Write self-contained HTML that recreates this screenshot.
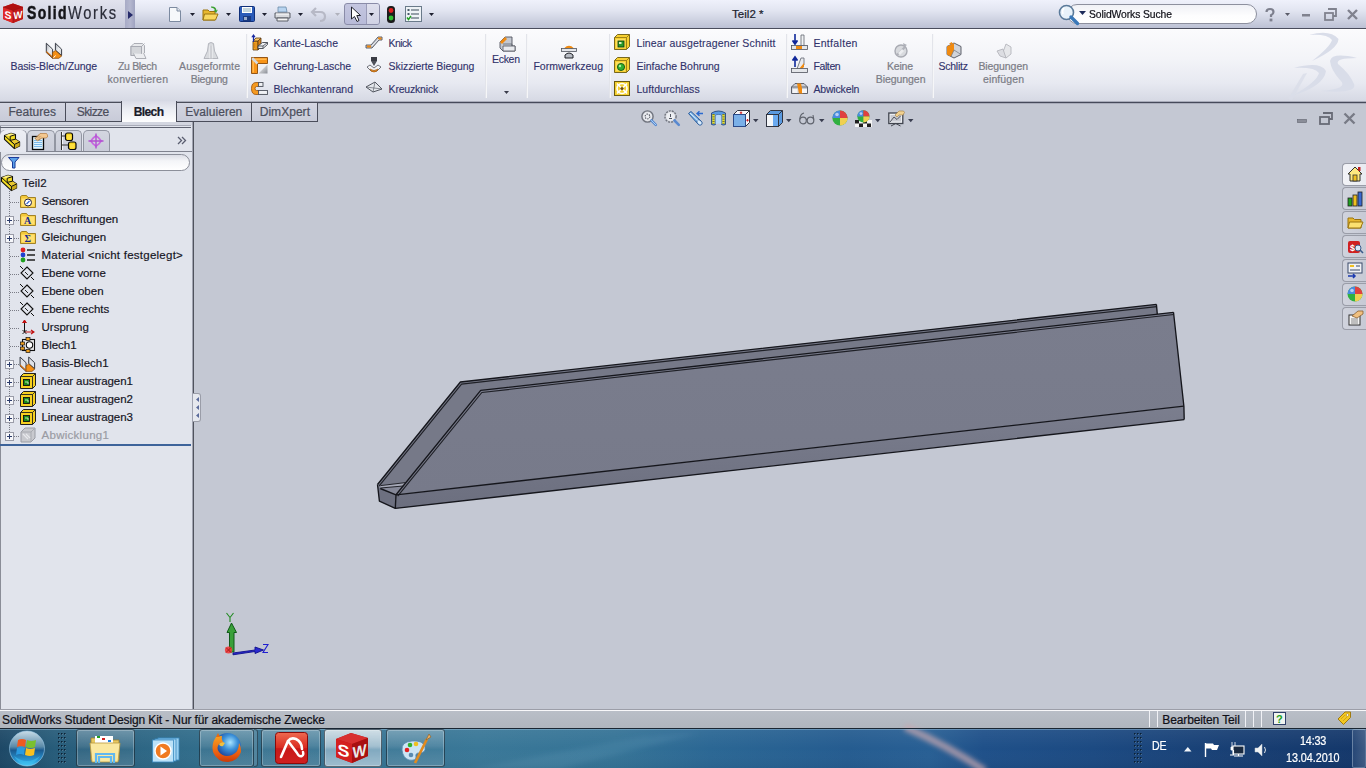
<!DOCTYPE html>
<html><head><meta charset="utf-8"><style>
*{margin:0;padding:0;box-sizing:border-box}
html,body{width:1366px;height:768px;overflow:hidden;font-family:"Liberation Sans",sans-serif;background:#c8ccd6;position:relative}
.a{position:absolute}
.t{white-space:nowrap;line-height:1}
.k{-webkit-text-stroke:.25px currentColor}
svg{position:absolute;overflow:visible}
#title{left:0;top:0;width:1366px;height:30px;background:linear-gradient(#eff1fb,#e2e5f1 35%,#cfd3e2 65%,#bcc1d4 93.3%,#4a4d5c 93.3%,#4a4d5c 96.67%,#ffffff 96.67%)}
#logo{left:0;top:0;width:125px;height:28px;background:linear-gradient(#e2e3ee,#d4d6e4 50%,#c3c6d8)}
#logoarr{left:125px;top:0;width:10px;height:28px;background:linear-gradient(90deg,#a8abc6,#b4b7cf 50%,#9fa3c0)}
#ribbon{left:0;top:30px;width:1366px;height:71px;background:linear-gradient(#fbfbfd,#f3f4f8 40%,#e7e9f1 75%,#d6d9e4)}
#ribline{left:0;top:101px;width:1366px;height:3px;background:linear-gradient(#a9acba,#a9acba 33%,#464a5a 33%,#464a5a 67%,#a9acba 67%)}
.sep{top:34px;width:2px;height:64px;background:linear-gradient(90deg,#d9dbe3,#ffffff)}
#tabs{left:0;top:104px;width:1366px;height:18px;background:#c4c8d3}
.tab{top:102px;height:20px;background:linear-gradient(#d4d6e2,#c8cbd8);border:1px solid #4a4d5a}
#view{left:194px;top:122px;width:1172px;height:588px;background:#c4c8d3}
#panel{left:0;top:122px;width:194px;height:587px;background:#e1e4ec}
#status{left:0;top:709px;width:1366px;height:19px;background:linear-gradient(#9c9ea8 0,#9c9ea8 1px,#f8f8fa 1px,#f8f8fa 2px,#b9bec7 2px,#b0b6be)}
#taskbar{left:0;top:728px;width:1366px;height:40px;border-top:1px solid #1a2632;box-shadow:inset 0 1px 0 rgba(150,190,210,.55);background:linear-gradient(90deg,#21476b 0,#2c5c7d 6%,#3a7190 16%,#3b7393 28%,#35698c 45%,#2d5c86 60%,#244e7e 75%,#1d4272 88%,#1a3b6b 100%)}
.tb{top:729px;height:38px;width:58px;border-radius:3px;border:1px solid rgba(10,20,30,.55);box-shadow:inset 0 0 0 1px rgba(255,255,255,.25);background:linear-gradient(rgba(255,255,255,.28),rgba(255,255,255,.12) 45%,rgba(255,255,255,.05) 55%,rgba(255,255,255,.14))}
</style></head><body>
<div id="title" class="a"></div><div id="logo" class="a"></div><div id="logoarr" class="a"></div>
<svg style="left:2px;top:3px;" width="22" height="21" viewBox="0 0 22 21"><path d="M1 4L11 0.5L21 4L21 16L11 20L1 16Z" fill="#c81818"/><path d="M1 4L11 0.5L21 4L11 7.5Z" fill="#b01010"/><path d="M1 4L11 7.5V20L1 16Z" fill="#e02828"/><path d="M11 7.5L21 4V16L11 20Z" fill="#c01a1a"/><path d="M1 4L11 7.5L21 4M11 7.5V20" stroke="#901010" stroke-width=".6" fill="none"/><text x="2.6" y="16.5" font-family="Liberation Sans" font-weight="bold" font-size="10.5" fill="#fff" transform="skewY(12) translate(0,-2)">S</text><text x="11.5" y="16" font-family="Liberation Sans" font-weight="bold" font-size="10" fill="#fff" transform="skewY(-12) translate(0,3)" textLength="9" lengthAdjust="spacingAndGlyphs">W</text></svg>
<div class="a t" style="left:26.50px;top:5.49px;font-size:17.5px;color:#141418;letter-spacing:1.650px;transform:scaleX(0.8000);transform-origin:0 0;font-weight:bold;-webkit-text-stroke:0.5px #141418;">Solid</div>
<div class="a t" style="left:67.50px;top:5.49px;font-size:17.5px;color:#2a2c38;letter-spacing:1.970px;transform:scaleX(0.8400);transform-origin:0 0;-webkit-text-stroke:0.22px #2a2c38;">Works</div>
<svg style="left:128px;top:11px" width="6" height="8"><path d="M0 0L5 4L0 8Z" fill="#252a6a"/></svg>
<svg style="left:168px;top:6px;" width="14" height="17" viewBox="0 0 14 17"><path d="M1.5 1.5H9L12.5 5V15.5H1.5Z" fill="#f6f8fb" stroke="#7c8aa0"/><path d="M9 1.5V5H12.5" fill="#dfe5ee" stroke="#7c8aa0"/></svg>
<svg style="left:190px;top:13px;" width="6" height="4" viewBox="0 0 6 4"><path d="M0 0H5L2.5 3Z" fill="#1e2030"/></svg>
<svg style="left:202px;top:5px;" width="17" height="17" viewBox="0 0 17 17"><path d="M1 5H6L7.5 6.5H13V15H1Z" fill="#e8b830" stroke="#9a7410"/><path d="M2.5 9H16L13.5 15H1Z" fill="#f8d860" stroke="#9a7410"/><path d="M9 1.5Q14 1 14.5 5.5L16 4.5L14 8L11.5 5L13 5.5Q12.5 3 9 2.5Z" fill="#3aa030"/></svg>
<svg style="left:226px;top:13px;" width="6" height="4" viewBox="0 0 6 4"><path d="M0 0H5L2.5 3Z" fill="#1e2030"/></svg>
<svg style="left:239px;top:6px;" width="16" height="16" viewBox="0 0 16 16"><rect x=".5" y=".5" width="15" height="15" rx="1" fill="#2a5ab8" stroke="#10307a"/><rect x="3" y="1" width="10" height="6" fill="#fff"/><path d="M4 3H12M4 5H12" stroke="#8ab"/><rect x="4" y="10" width="8" height="5" fill="#1a3a80"/><rect x="5" y="11" width="3" height="3" fill="#9ac"/></svg>
<svg style="left:262px;top:13px;" width="6" height="4" viewBox="0 0 6 4"><path d="M0 0H5L2.5 3Z" fill="#1e2030"/></svg>
<svg style="left:274px;top:6px;" width="17" height="16" viewBox="0 0 17 16"><path d="M4 1H12L13 6H4Z" fill="#b8d4f0" stroke="#6a8aa8" stroke-width=".8"/><path d="M1 7H16V12H1Z" fill="#d8dade" stroke="#5a5e66"/><path d="M3 12H14V15H3Z" fill="#f4f4f4" stroke="#5a5e66"/><path d="M2 8H15" stroke="#fff"/></svg>
<svg style="left:298px;top:13px;" width="6" height="4" viewBox="0 0 6 4"><path d="M0 0H5L2.5 3Z" fill="#1e2030"/></svg>
<svg style="left:311px;top:6px;" width="16" height="16" viewBox="0 0 16 16"><path d="M5 2L1 6L5 10M1.5 6H9Q14 6 14 10.5Q14 15 9 15" fill="none" stroke="#b7b9c6" stroke-width="2.2"/></svg>
<svg style="left:335px;top:13px;" width="6" height="4" viewBox="0 0 6 4"><path d="M0 0H5L2.5 3Z" fill="#b0b2bc"/></svg>
<div class="a" style="left:344px;top:3px;width:36px;height:22px;border:1px solid #8a8ca8;border-radius:3px;background:linear-gradient(#c4c6e0,#b8bbd8)"></div>
<div class="a" style="left:366px;top:4px;width:13px;height:20px;background:linear-gradient(#dfe0ee,#d0d2e4);border-left:1px solid #9a9cb8;border-radius:0 2px 2px 0"></div>
<svg style="left:350px;top:6px;" width="12" height="16" viewBox="0 0 12 16"><path d="M1.5 1V13L4.5 10.5L7 15.5L9 14.5L6.8 9.5H10.5Z" fill="#fff" stroke="#20222c"/></svg>
<svg style="left:369px;top:13px;" width="6" height="4" viewBox="0 0 6 4"><path d="M0 0H5L2.5 3Z" fill="#1e2030"/></svg>
<svg style="left:386px;top:6px;" width="10" height="17" viewBox="0 0 10 17"><rect x="1" y="0" width="8" height="17" rx="3.5" fill="#1c1c1c"/><circle cx="5" cy="4.5" r="2.4" fill="#e02020"/><circle cx="5" cy="12" r="2.4" fill="#30c030"/></svg>
<svg style="left:405px;top:6px;" width="17" height="16" viewBox="0 0 17 16"><rect x=".5" y=".5" width="16" height="15" fill="#eef2f6" stroke="#6a7a8a"/><path d="M6 4H14M6 8H14M6 12H14" stroke="#3a4a5a"/><rect x="2.5" y="3" width="2" height="2" fill="#4a5a6a"/><rect x="2.5" y="7" width="2" height="2" fill="#4a5a6a"/><path d="M2 11.5L3.5 13.5L6 10" stroke="#20a020" stroke-width="1.4" fill="none"/></svg>
<svg style="left:429px;top:13px;" width="6" height="4" viewBox="0 0 6 4"><path d="M0 0H5L2.5 3Z" fill="#1e2030"/></svg>
<div class="a t" style="left:732.00px;top:9.17px;font-size:11.5px;color:#20222c;letter-spacing:0.030px;-webkit-text-stroke:0.22px #20222c;">Teil2 *</div>
<div class="a" style="left:1067px;top:4px;width:190px;height:20px;border-radius:10px;border:1px solid #8d909e;background:linear-gradient(#f0f1f6,#fdfdfe 60%,#ffffff)"></div>
<svg style="left:1058px;top:4px;" width="22" height="21" viewBox="0 0 22 21"><circle cx="8.5" cy="8.5" r="7" fill="#e8f2fa" stroke="#5a7a9a" stroke-width="1.6"/><path d="M6 4Q4 6 5 10" stroke="#fff" stroke-width="1.5" fill="none"/><path d="M13 13L19.5 19.5" stroke="#3a78b8" stroke-width="3.4" stroke-linecap="round"/></svg>
<svg style="left:1079px;top:11px" width="8" height="5"><path d="M0 0H7L3.5 4Z" fill="#1c2a5a"/></svg>
<div class="a t" style="left:1089.00px;top:8.57px;font-size:11.5px;color:#101018;letter-spacing:-0.102px;transform:scaleX(0.9000);transform-origin:0 0;-webkit-text-stroke:0.22px #101018;">SolidWorks Suche</div>
<svg style="left:1265px;top:8px;" width="10" height="14" viewBox="0 0 10 14"><path d="M1.5 4Q1.5 1 5 1Q8.5 1 8.5 4Q8.5 6 6 7.2V9" fill="none" stroke="#7e808e" stroke-width="2.2"/><rect x="4.6" y="10.6" width="2.8" height="2.8" fill="#7e808e"/></svg>
<svg style="left:1285px;top:13px;" width="6" height="4" viewBox="0 0 6 4"><path d="M0 0H5L2.5 3Z" fill="#5a5c68"/></svg>
<svg style="left:1302px;top:13px;" width="9" height="4" viewBox="0 0 9 4"><rect x="0" y="1" width="8" height="2.5" fill="#80828e"/></svg>
<svg style="left:1324px;top:8px;" width="13" height="13" viewBox="0 0 13 13"><path d="M4 1H12V8H9" fill="none" stroke="#80828e" stroke-width="1.8"/><rect x="1" y="5" width="8" height="7" fill="none" stroke="#80828e" stroke-width="1.8"/></svg>
<svg style="left:1347px;top:9px;" width="11" height="11" viewBox="0 0 11 11"><path d="M1 1L10 10M10 1L1 10" stroke="#80828e" stroke-width="2.4"/></svg>
<div id="ribbon" class="a"></div><div id="ribline" class="a"></div>
<svg style="left:1270px;top:28px;" width="96" height="74" viewBox="0 0 96 74"><path d="M39 7Q60 1 68.5 11Q68 21 42 33Q60 19 62 12Q58 6 39 7Z" fill="#d9dde9"/><path d="M24 40Q50 33 56 43Q54 58 22 68Q47 54 49 45Q45 39 24 40Z" fill="#d9dde9"/><path d="M33 46L37 45L22 72L18 71Z" fill="#d9dde9" fill-opacity=".8"/><path d="M87 30Q62 24 60 33Q61 42 70 52Q80 61 50 63Q88 66 84 56Q80 46 68 36Q65 30 87 30Z" fill="#d9dde9"/></svg>
<div class="a sep" style="left:246px"></div>
<div class="a sep" style="left:485px"></div>
<div class="a sep" style="left:526px"></div>
<div class="a sep" style="left:609px"></div>
<div class="a sep" style="left:786px"></div>
<div class="a sep" style="left:932px"></div>
<div class="a t" style="left:10.60px;top:60.81px;font-size:10.5px;color:#30326a;letter-spacing:-0.108px;-webkit-text-stroke:0.12px #30326a;">Basis-Blech/Zunge</div>
<div class="a t" style="left:118.00px;top:60.81px;font-size:10.5px;color:#7c7d86;letter-spacing:-0.348px;-webkit-text-stroke:0.22px #7c7d86;">Zu Blech</div>
<div class="a t" style="left:107.60px;top:73.81px;font-size:10.5px;color:#7c7d86;letter-spacing:0.238px;-webkit-text-stroke:0.22px #7c7d86;">konvertieren</div>
<div class="a t" style="left:179.00px;top:60.81px;font-size:10.5px;color:#7c7d86;letter-spacing:0.147px;-webkit-text-stroke:0.22px #7c7d86;">Ausgeformte</div>
<div class="a t" style="left:190.70px;top:73.81px;font-size:10.5px;color:#7c7d86;letter-spacing:-0.223px;-webkit-text-stroke:0.22px #7c7d86;">Biegung</div>
<div class="a t" style="left:273.50px;top:37.81px;font-size:10.5px;color:#30326a;letter-spacing:-0.027px;-webkit-text-stroke:0.12px #30326a;">Kante-Lasche</div>
<div class="a t" style="left:273.50px;top:60.96px;font-size:10.5px;color:#30326a;letter-spacing:-0.055px;-webkit-text-stroke:0.12px #30326a;">Gehrung-Lasche</div>
<div class="a t" style="left:273.50px;top:84.11px;font-size:10.5px;color:#30326a;letter-spacing:0.056px;-webkit-text-stroke:0.12px #30326a;">Blechkantenrand</div>
<div class="a t" style="left:388.60px;top:37.81px;font-size:10.5px;color:#30326a;letter-spacing:-0.569px;-webkit-text-stroke:0.12px #30326a;">Knick</div>
<div class="a t" style="left:388.60px;top:60.96px;font-size:10.5px;color:#30326a;letter-spacing:-0.074px;-webkit-text-stroke:0.12px #30326a;">Skizzierte Biegung</div>
<div class="a t" style="left:388.60px;top:84.11px;font-size:10.5px;color:#30326a;letter-spacing:-0.195px;-webkit-text-stroke:0.12px #30326a;">Kreuzknick</div>
<div class="a t" style="left:492.00px;top:53.81px;font-size:10.5px;color:#30326a;letter-spacing:-0.296px;-webkit-text-stroke:0.12px #30326a;">Ecken</div>
<div class="a t" style="left:533.40px;top:61.11px;font-size:10.5px;color:#30326a;letter-spacing:0.015px;-webkit-text-stroke:0.12px #30326a;">Formwerkzeug</div>
<div class="a t" style="left:636.40px;top:37.81px;font-size:10.5px;color:#30326a;letter-spacing:0.154px;-webkit-text-stroke:0.12px #30326a;">Linear ausgetragener Schnitt</div>
<div class="a t" style="left:636.40px;top:60.96px;font-size:10.5px;color:#30326a;letter-spacing:-0.012px;-webkit-text-stroke:0.12px #30326a;">Einfache Bohrung</div>
<div class="a t" style="left:636.40px;top:84.11px;font-size:10.5px;color:#30326a;letter-spacing:0.071px;-webkit-text-stroke:0.12px #30326a;">Luftdurchlass</div>
<div class="a t" style="left:813.40px;top:37.81px;font-size:10.5px;color:#30326a;letter-spacing:0.319px;-webkit-text-stroke:0.12px #30326a;">Entfalten</div>
<div class="a t" style="left:813.40px;top:60.96px;font-size:10.5px;color:#30326a;letter-spacing:-0.377px;-webkit-text-stroke:0.12px #30326a;">Falten</div>
<div class="a t" style="left:813.40px;top:84.11px;font-size:10.5px;color:#30326a;letter-spacing:-0.159px;-webkit-text-stroke:0.12px #30326a;">Abwickeln</div>
<div class="a t" style="left:887.00px;top:61.11px;font-size:10.5px;color:#7c7d86;letter-spacing:-0.214px;-webkit-text-stroke:0.22px #7c7d86;">Keine</div>
<div class="a t" style="left:875.70px;top:74.11px;font-size:10.5px;color:#7c7d86;letter-spacing:-0.052px;-webkit-text-stroke:0.22px #7c7d86;">Biegungen</div>
<div class="a t" style="left:938.40px;top:61.11px;font-size:10.5px;color:#30326a;letter-spacing:-0.221px;-webkit-text-stroke:0.12px #30326a;">Schlitz</div>
<div class="a t" style="left:978.40px;top:61.11px;font-size:10.5px;color:#7c7d86;letter-spacing:-0.077px;-webkit-text-stroke:0.22px #7c7d86;">Biegungen</div>
<div class="a t" style="left:983.00px;top:74.11px;font-size:10.5px;color:#7c7d86;letter-spacing:0.102px;-webkit-text-stroke:0.22px #7c7d86;">einfügen</div>
<svg style="left:42px;top:40px;" width="24" height="22" viewBox="0 0 24 22"><defs><linearGradient id="bbg" x1="0" y1="0" x2="1" y2="1"><stop offset="0" stop-color="#a8acb4"/><stop offset=".5" stop-color="#eef0f2"/><stop offset="1" stop-color="#c8ccd2"/></linearGradient></defs><path d="M4.3 3.2L10.6 9.2V18.3L4.3 12.6Z" fill="url(#bbg)" stroke="#3a3e48" stroke-width="1"/><path d="M4.3 10.8L10.6 16.5V18.3L4.3 12.6Z" fill="#c86a10"/><path d="M13.4 3.2L19.6 9.2V15.5L13.4 10Z" fill="url(#bbg)" stroke="#3a3e48" stroke-width="1"/><path d="M10.6 12.5L13.4 10.5L19.6 16L16.8 18.3H10.6Z" fill="#f59015" stroke="#8a4a08" stroke-width=".8"/><path d="M11.5 17.8L13.5 15.5" stroke="#fff" stroke-width="1"/></svg>
<svg style="left:130px;top:43px;" width="17" height="16" viewBox="0 0 17 16"><path d="M1 3.5L4 .5H12.5L14.5 2.5V10L11.5 12.5H1Z" fill="#e8e9ec" stroke="#a4a6ae" stroke-width=".9"/><rect x="1" y="3.5" width="10.5" height="9" fill="#d4d6da" stroke="#a4a6ae" stroke-width=".9"/><path d="M11.5 3.5L14.5 .5" stroke="#a4a6ae" stroke-width=".9"/><path d="M3.5 10.5L6 15.5H16L14 11" fill="#ecedf0" stroke="#a4a6ae" stroke-width=".9"/></svg>
<svg style="left:203px;top:42px;" width="16" height="18" viewBox="0 0 16 18"><path d="M5.5 1.5Q8 -.5 10.5 1.5L11.5 9L15 16.5H1L4.5 9Z" fill="#d8dade" stroke="#aeb0b8" stroke-width=".9"/><path d="M7 3.5V16.5M9 3.5V16.5" stroke="#f4f5f7" stroke-width="1"/><path d="M8 3.5V16.5" stroke="#b8bac0" stroke-width="1"/></svg>
<svg style="left:251px;top:34px;" width="17" height="17" viewBox="0 0 17 17"><path d="M2 7H7V16H2Z" fill="#f6a524" stroke="#5a3a10" stroke-width=".8"/><path d="M7 7L10 4V13L7 16Z" fill="#d8801a" stroke="#5a3a10" stroke-width=".8"/><path d="M2 7L5 4H10L7 7Z" fill="#fcc868" stroke="#5a3a10" stroke-width=".8"/><path d="M3.5 9V14M5 8.5V15" stroke="#c87010" stroke-width=".6"/><path d="M7 12L11.5 8.5H16.5V10.5L12 14.5H7Z" fill="#eceef2" stroke="#40444e" stroke-width=".9"/><path d="M7 12H12L16.5 8.5M12 12V14.5" fill="none" stroke="#40444e" stroke-width=".8"/><path d="M2.5 8V2" stroke="#1a2aa0" stroke-width="1.3"/><path d="M.3 3.2L2.5 0L4.7 3.2Z" fill="#1a2aa0"/></svg>
<svg style="left:251px;top:57px;" width="17" height="17" viewBox="0 0 17 17"><defs><linearGradient id="gl" x1="0" y1="0" x2="1" y2="1"><stop offset="0" stop-color="#ffffff"/><stop offset="1" stop-color="#8a8e96"/></linearGradient></defs><path d="M.5 .5H16.5V6.5H6.5V16.5H.5Z" fill="#f89418" stroke="#8a4a08" stroke-width=".9"/><path d="M1.5 1.5H15.5V3H3V15.5H1.5Z" fill="#ffb850"/><path d="M1.2 1.2L6.5 6.5" stroke="#d4d8de" stroke-width="2.6"/><path d="M16.5 7.5V16.5H7.5Z" fill="url(#gl)"/></svg>
<svg style="left:251px;top:82px;" width="17" height="13" viewBox="0 0 17 13"><path d="M7.5 .5H5Q.5 .5 .5 6.5Q.5 12.5 5 12.5H7.5V8.5H5.5Q4 8.5 4 6.5Q4 4.5 5.5 4.5H7.5Z" fill="#f59a20" stroke="#9a5008" stroke-width=".8"/><rect x="7.5" y=".5" width="4.5" height="4" fill="#e8eaee" stroke="#50545e" stroke-width=".9"/><rect x="7.5" y="8.5" width="9" height="4" fill="#e8eaee" stroke="#50545e" stroke-width=".9"/><path d="M9 2H11M9 10H15" stroke="#fff" stroke-width=".8"/></svg>
<svg style="left:366px;top:35px;" width="17" height="13" viewBox="0 0 17 13"><path d="M0 10H5L12 2H16V5H13L6 13H0Z" fill="#c0c4cc" stroke="#50545e" stroke-width=".9"/><path d="M1 10.5H5V12.5H1Z" fill="#f08a10"/><path d="M12 2.5H15.5V4.5H12Z" fill="#f08a10"/><path d="M6 11L12.5 4" stroke="#eef0f4" stroke-width="1"/></svg>
<svg style="left:366px;top:57px;" width="16" height="16" viewBox="0 0 16 16"><rect x="5" y="0" width="6" height="4" fill="#3a3c44"/><path d="M5 4H11L8 9Z" fill="#50525a"/><path d="M1 10L4 8L8 11L12 8L15 10L11 14H5Z" fill="#f4f4f6" stroke="#50545e" stroke-width=".8"/><path d="M4 12Q8 15 12 12L11 14Q8 16 5 14Z" fill="#f08a10" stroke="#9a5008" stroke-width=".6"/></svg>
<svg style="left:366px;top:82px;" width="17" height="11" viewBox="0 0 17 11"><path d="M0 5L9 0L16 7L7 10Z" fill="#e4e7ec" stroke="#40444e" stroke-width=".9"/><path d="M9 0L7 10M0 5L16 7" stroke="#60646e" stroke-width=".7"/></svg>
<svg style="left:499px;top:36px;" width="17" height="16" viewBox="0 0 17 16"><path d="M1 6L6 1H13V10H16V15H4L1 12Z" fill="#c4c8d0" stroke="#50545e" stroke-width=".9"/><path d="M1 6L6 1L8 3L3 8Z" fill="#f08a10"/><path d="M4 10H16V15H4Z" fill="#e8eaee" stroke="#50545e" stroke-width=".8"/><path d="M4 8H13V10" fill="none" stroke="#60646e" stroke-width=".8"/></svg>
<svg style="left:504px;top:91px;" width="6" height="4" viewBox="0 0 6 4"><path d="M0 0H5L2.5 3Z" fill="#3a3c4a"/></svg>
<svg style="left:561px;top:45px;" width="16" height="13" viewBox="0 0 16 13"><path d="M4 4Q8 0 12 4" fill="none" stroke="#f08a10" stroke-width="2.4"/><rect x="0.5" y="3.5" width="15" height="3" fill="#e4e6ea" stroke="#50545e" stroke-width=".8"/><path d="M4 13V10Q8 6 12 10V13Z" fill="#b8bcc4" stroke="#202228" stroke-width="1"/></svg>
<svg style="left:614px;top:34px;" width="16" height="16" viewBox="0 0 16 16"><path d="M.5 3.5L3.5 .5H15.5V12.5L12.5 15.5H.5Z" fill="#f8d030" stroke="#6a5a10" stroke-width=".9"/><path d="M.5 3.5H12.5V15.5M12.5 3.5L15.5 .5" fill="none" stroke="#8a7010" stroke-width=".8"/><rect x="2" y="5" width="9" height="9" fill="#fbe060"/><rect x="4" y="7" width="6" height="6" fill="#2a9a2a" stroke="#0a3a0a" stroke-width=".8"/><rect x="5" y="8" width="2.5" height="2" fill="#e0f0c0"/></svg>
<svg style="left:614px;top:57px;" width="16" height="16" viewBox="0 0 16 16"><path d="M.5 3.5L3.5 .5H15.5V12.5L12.5 15.5H.5Z" fill="#f8d030" stroke="#6a5a10" stroke-width=".9"/><path d="M.5 3.5H12.5V15.5M12.5 3.5L15.5 .5" fill="none" stroke="#8a7010" stroke-width=".8"/><rect x="2" y="5" width="9" height="9" fill="#fbe060"/><circle cx="7" cy="10" r="3.6" fill="#30b030" stroke="#0a4a0a" stroke-width=".8"/><circle cx="6" cy="9" r="1.2" fill="#b0f0a0"/></svg>
<svg style="left:614px;top:81px;" width="16" height="15" viewBox="0 0 16 15"><rect x=".5" y=".5" width="15" height="14" fill="#f4d030" stroke="#6a5a10"/><circle cx="8" cy="7.5" r="5" fill="none" stroke="#fff" stroke-width="1.6"/><path d="M3 2.5L13 12.5M13 2.5L3 12.5" stroke="#fff" stroke-width="1.6"/><circle cx="8" cy="7.5" r="1.6" fill="#6a4a10"/></svg>
<svg style="left:791px;top:34px;" width="17" height="16" viewBox="0 0 17 16"><path d="M4 0V9M1.5 6.5L4 10L6.5 6.5" stroke="#10289a" stroke-width="1.6" fill="#10289a"/><path d="M10 1H13V12H10Z" fill="#f0f2f4" stroke="#60646e" stroke-width=".8"/><rect x=".5" y="11.5" width="16" height="4" fill="#e4e6ea" stroke="#50545e" stroke-width=".8"/><rect x="5" y="12" width="6" height="3" fill="#f08a10"/></svg>
<svg style="left:791px;top:57px;" width="17" height="16" viewBox="0 0 17 16"><path d="M4 10V1M1.5 3.5L4 0L6.5 3.5" stroke="#10289a" stroke-width="1.6" fill="#10289a"/><path d="M10 1H13V8L9 12H6Z" fill="#e8eaee" stroke="#60646e" stroke-width=".8"/><path d="M13 6L8 12H11L13 10Z" fill="#f08a10"/><rect x=".5" y="11.5" width="16" height="4" fill="#e4e6ea" stroke="#50545e" stroke-width=".8"/></svg>
<svg style="left:791px;top:83px;" width="17" height="11" viewBox="0 0 17 11"><path d="M.5 4L4 .5H13L16.5 4V10.5H.5Z" fill="#c8ccd4" stroke="#50545e" stroke-width=".9"/><path d="M.5 4H16.5" stroke="#50545e" stroke-width=".8"/><path d="M6 .5H10L12 10.5H8Z" fill="#f08a10"/><rect x="1.5" y="6" width="5" height="4" fill="#f4f4f6"/><rect x="11" y="6" width="5" height="4" fill="#f4f4f6"/></svg>
<svg style="left:893px;top:43px;" width="16" height="16" viewBox="0 0 16 16"><circle cx="8" cy="8" r="6" fill="#d8dade" stroke="#a8aab2" stroke-width="1.4"/><path d="M4 12L12 4" stroke="#b0b2ba" stroke-width="2"/><path d="M10 0L14 2L11 4Z" fill="#aeb0b8"/><path d="M5 10L9 6L11 8L7 12Z" fill="#ecedf0"/></svg>
<svg style="left:946px;top:42px;" width="16" height="17" viewBox="0 0 16 17"><path d="M8 1L15 4.5V12.5L8 16L1 12.5V4.5Z" fill="#d0d4da" stroke="#50545e" stroke-width=".9"/><path d="M8 1L1 4.5V12.5L5 14.5L8 8V1Z" fill="#f08a10"/><path d="M8 8L15 12.5M8 8L5 14.5" stroke="#70747e" stroke-width=".7"/><path d="M3 1.5L6 0L6.5 3Z" fill="#f08a10"/></svg>
<svg style="left:996px;top:43px;" width="17" height="16" viewBox="0 0 17 16"><path d="M10 1L15 4V11L10 15L7 9Z" fill="#e6e7ea" stroke="#b4b6bc" stroke-width=".9"/><path d="M1 8L7 6L10 15L4 13Z" fill="#dcdde2" stroke="#b4b6bc" stroke-width=".9"/></svg>
<div id="tabs" class="a"></div>
<div class="a tab" style="left:-1px;width:67px"></div>
<div class="a t" style="left:8.50px;top:105.94px;font-size:12px;color:#4b4e5c;letter-spacing:0.020px;-webkit-text-stroke:0.22px #4b4e5c;">Features</div>
<div class="a tab" style="left:65px;width:58px"></div>
<div class="a t" style="left:76.80px;top:105.94px;font-size:12px;color:#4b4e5c;letter-spacing:-0.589px;-webkit-text-stroke:0.22px #4b4e5c;">Skizze</div>
<div class="a tab" style="left:176px;width:76px"></div>
<div class="a t" style="left:185.30px;top:105.94px;font-size:12px;color:#4b4e5c;letter-spacing:0.033px;-webkit-text-stroke:0.22px #4b4e5c;">Evaluieren</div>
<div class="a tab" style="left:251px;width:67px"></div>
<div class="a t" style="left:259.70px;top:105.94px;font-size:12px;color:#4b4e5c;letter-spacing:0.041px;-webkit-text-stroke:0.22px #4b4e5c;">DimXpert</div>
<div class="a" style="left:121px;top:101px;width:56px;height:23px;background:linear-gradient(#d9dbe6,#eceef4 40%,#f8f9fb 80%,#ffffff);border:1px solid #4a4d5a;border-top:none"></div>
<div class="a t" style="left:133.70px;top:105.54px;font-size:12px;color:#1a1c2a;letter-spacing:-0.595px;font-weight:bold;-webkit-text-stroke:0.22px #1a1c2a;">Blech</div>
<div id="view" class="a"></div>
<div id="panel" class="a"></div>
<div class="a" style="left:192px;top:122px;width:1px;height:587px;background:#a0a3b0"></div>
<div class="a" style="left:193px;top:122px;width:1px;height:587px;background:#50535d"></div>
<div class="a" style="left:0px;top:122px;width:1px;height:587px;background:#8a8d97"></div>
<div class="a" style="left:0;top:122px;width:192px;height:3px;background:#d3d6e0"></div>
<div class="a" style="left:0;top:125px;width:191px;height:1px;background:#a8abb8"></div>
<div class="a" style="left:0;top:127px;width:191px;height:1px;background:#5e6270"></div>
<div class="a" style="left:1px;top:151px;width:190px;height:1px;background:#a6a9b4"></div>
<div class="a" style="left:0px;top:130px;width:27px;height:22px;border:1px solid #9296a2;border-left:none;border-bottom:none;border-radius:5px 5px 0 0;background:linear-gradient(#eceef4,#e4e6ee)"></div>
<div class="a" style="left:27px;top:130px;width:28px;height:22px;border:1px solid #9296a2;border-bottom:none;border-radius:5px 5px 0 0;background:linear-gradient(#d3d6e0,#c9ccd8)"></div>
<div class="a" style="left:55px;top:130px;width:27px;height:22px;border:1px solid #9296a2;border-bottom:none;border-radius:5px 5px 0 0;background:linear-gradient(#d3d6e0,#c9ccd8)"></div>
<div class="a" style="left:83px;top:130px;width:27px;height:22px;border:1px solid #9296a2;border-bottom:none;border-radius:5px 5px 0 0;background:linear-gradient(#d3d6e0,#c9ccd8)"></div>
<div class="a" style="left:1px;top:151px;width:191px;height:1px;background:#80838f"></div>
<div class="a" style="left:1px;top:130px;width:25px;height:22px;background:linear-gradient(#eceef4,#e4e6ee);border-radius:5px 5px 0 0"></div>
<svg style="left:4px;top:133px;" width="17" height="17" viewBox="0 0 17 17"><path d="M.5 2.5L7 .3L11.5 1.6V6.2L15.6 9V13.1L10.4 15.6L.5 6.4Z" fill="#f2dc20" stroke="#101010" stroke-width="1.1" stroke-linejoin="round"/><path d="M.5 2.5L7 .3L11.5 1.6L6 3.3Z" fill="#fff080"/><path d="M6.2 7.4L11.5 6.2L15.6 9L10.4 11.4Z" fill="#e8c830"/><path d="M10.4 11.4L15.6 9V13.1L10.4 15.6Z" fill="#c8a818"/><path d="M.5 2.5L10.4 11.4V15.6M10.4 11.4L15.6 9M6.2 3.3V7.4L11.5 6.2M6.2 3.3L11.5 1.6M6.2 7.4L10.4 11.4" fill="none" stroke="#101010" stroke-width="1"/></svg>
<svg style="left:31px;top:133px;" width="18" height="17" viewBox="0 0 18 17"><rect x="1.5" y="3.5" width="11" height="13" fill="#dff2fc" stroke="#080808" stroke-width="1.3"/><path d="M3 7.5H11M3 9.5H11M3 11.5H11M3 13.5H11" stroke="#7ab8e8" stroke-width="1"/><path d="M4 5.5L9 .5H15.5L16.5 2V4L15 5H11L6.5 8Z" fill="#f4c890" stroke="#b07a40" stroke-width=".7"/><path d="M4.5 5.5L9 1.5M6 6.5L10 2.5M7.5 7L10.5 4" stroke="#6a4a20" stroke-width=".6" stroke-dasharray="1 1"/></svg>
<svg style="left:60px;top:132px;" width="17" height="18" viewBox="0 0 17 18"><path d="M1.5 0V18" stroke="#303030" stroke-width="1.1"/><path d="M2.5 0V18" stroke="#fff" stroke-width=".8"/><path d="M2 4H6M2 13H8" stroke="#303030" stroke-width="1"/><rect x="5.5" y="1" width="7" height="7.5" rx="2" fill="#f6d420" stroke="#080808" stroke-width="1.2"/><rect x="7" y="3" width="4.5" height="4.5" fill="#ffe040"/><rect x="8.5" y="10" width="7.5" height="7.5" rx="2" fill="#f6d420" stroke="#080808" stroke-width="1.2"/><rect x="10" y="12" width="4.5" height="4.5" fill="#ffe040"/></svg>
<svg style="left:88px;top:133px;" width="16" height="16" viewBox="0 0 16 16"><path d="M8 2.5L13.5 8L8 13.5L2.5 8Z" fill="none" stroke="#c868e0" stroke-width="1.4" stroke-linejoin="round"/><circle cx="8" cy="8" r="4.3" fill="none" stroke="#c868e0" stroke-width="1.2"/><path d="M8 .5V15.5M.5 8H15.5" stroke="#b050d0" stroke-width="1.4"/></svg>
<svg style="left:177px;top:136px;" width="10" height="9" viewBox="0 0 10 9"><path d="M1 1L4.5 4.5L1 8M5 1L8.5 4.5L5 8" fill="none" stroke="#5a5e70" stroke-width="1.3"/></svg>
<div class="a" style="left:1px;top:154px;width:189px;height:17px;border-radius:9px;border:1px solid #8c8f9a;background:linear-gradient(#dcdee6,#f4f5f8 40%,#ffffff)"></div>
<svg style="left:8px;top:157px;" width="12" height="12" viewBox="0 0 12 12"><path d="M.5 .5H11L7 5V11H4.5V5Z" fill="#5aa0e8" stroke="#1a3a9a"/></svg>
<div class="a" style="left:9px;top:191px;width:1px;height:248px;background-image:linear-gradient(#7a7c86 50%,transparent 50%);background-size:1px 2px"></div>
<div class="a" style="left:10px;top:202px;width:10px;height:1px;background-image:linear-gradient(90deg,#7a7c86 50%,transparent 50%);background-size:2px 1px"></div>
<div class="a" style="left:10px;top:220px;width:10px;height:1px;background-image:linear-gradient(90deg,#7a7c86 50%,transparent 50%);background-size:2px 1px"></div>
<div class="a" style="left:10px;top:238px;width:10px;height:1px;background-image:linear-gradient(90deg,#7a7c86 50%,transparent 50%);background-size:2px 1px"></div>
<div class="a" style="left:10px;top:256px;width:10px;height:1px;background-image:linear-gradient(90deg,#7a7c86 50%,transparent 50%);background-size:2px 1px"></div>
<div class="a" style="left:10px;top:274px;width:10px;height:1px;background-image:linear-gradient(90deg,#7a7c86 50%,transparent 50%);background-size:2px 1px"></div>
<div class="a" style="left:10px;top:292px;width:10px;height:1px;background-image:linear-gradient(90deg,#7a7c86 50%,transparent 50%);background-size:2px 1px"></div>
<div class="a" style="left:10px;top:310px;width:10px;height:1px;background-image:linear-gradient(90deg,#7a7c86 50%,transparent 50%);background-size:2px 1px"></div>
<div class="a" style="left:10px;top:328px;width:10px;height:1px;background-image:linear-gradient(90deg,#7a7c86 50%,transparent 50%);background-size:2px 1px"></div>
<div class="a" style="left:10px;top:346px;width:10px;height:1px;background-image:linear-gradient(90deg,#7a7c86 50%,transparent 50%);background-size:2px 1px"></div>
<div class="a" style="left:10px;top:364px;width:10px;height:1px;background-image:linear-gradient(90deg,#7a7c86 50%,transparent 50%);background-size:2px 1px"></div>
<div class="a" style="left:10px;top:382px;width:10px;height:1px;background-image:linear-gradient(90deg,#7a7c86 50%,transparent 50%);background-size:2px 1px"></div>
<div class="a" style="left:10px;top:400px;width:10px;height:1px;background-image:linear-gradient(90deg,#7a7c86 50%,transparent 50%);background-size:2px 1px"></div>
<div class="a" style="left:10px;top:418px;width:10px;height:1px;background-image:linear-gradient(90deg,#7a7c86 50%,transparent 50%);background-size:2px 1px"></div>
<div class="a" style="left:10px;top:436px;width:10px;height:1px;background-image:linear-gradient(90deg,#7a7c86 50%,transparent 50%);background-size:2px 1px"></div>
<div class="a t" style="left:22.30px;top:177.67px;font-size:11.5px;color:#15151f;letter-spacing:0.162px;-webkit-text-stroke:.18px #15151f;">Teil2</div>
<div class="a t" style="left:41.50px;top:195.67px;font-size:11.5px;color:#15151f;letter-spacing:-0.290px;-webkit-text-stroke:.18px #15151f;">Sensoren</div>
<div class="a t" style="left:41.50px;top:213.67px;font-size:11.5px;color:#15151f;-webkit-text-stroke:.18px #15151f;">Beschriftungen</div>
<div class="a t" style="left:41.50px;top:231.67px;font-size:11.5px;color:#15151f;-webkit-text-stroke:.18px #15151f;">Gleichungen</div>
<div class="a t" style="left:41.50px;top:249.67px;font-size:11.5px;color:#15151f;letter-spacing:0.247px;-webkit-text-stroke:.18px #15151f;">Material &lt;nicht festgelegt&gt;</div>
<div class="a t" style="left:41.50px;top:267.67px;font-size:11.5px;color:#15151f;letter-spacing:-0.092px;-webkit-text-stroke:.18px #15151f;">Ebene vorne</div>
<div class="a t" style="left:41.50px;top:285.67px;font-size:11.5px;color:#15151f;-webkit-text-stroke:.18px #15151f;">Ebene oben</div>
<div class="a t" style="left:41.50px;top:303.67px;font-size:11.5px;color:#15151f;-webkit-text-stroke:.18px #15151f;">Ebene rechts</div>
<div class="a t" style="left:41.50px;top:321.67px;font-size:11.5px;color:#15151f;-webkit-text-stroke:.18px #15151f;">Ursprung</div>
<div class="a t" style="left:41.50px;top:339.67px;font-size:11.5px;color:#15151f;-webkit-text-stroke:.18px #15151f;">Blech1</div>
<div class="a t" style="left:41.50px;top:357.67px;font-size:11.5px;color:#15151f;-webkit-text-stroke:.18px #15151f;">Basis-Blech1</div>
<div class="a t" style="left:41.50px;top:375.67px;font-size:11.5px;color:#15151f;letter-spacing:-0.082px;-webkit-text-stroke:.18px #15151f;">Linear austragen1</div>
<div class="a t" style="left:41.50px;top:393.67px;font-size:11.5px;color:#15151f;letter-spacing:-0.082px;-webkit-text-stroke:.18px #15151f;">Linear austragen2</div>
<div class="a t" style="left:41.50px;top:411.67px;font-size:11.5px;color:#15151f;letter-spacing:-0.082px;-webkit-text-stroke:.18px #15151f;">Linear austragen3</div>
<div class="a t" style="left:41.50px;top:429.67px;font-size:11.5px;color:#9a9ba3;letter-spacing:0.283px;-webkit-text-stroke:.18px #9a9ba3;">Abwicklung1</div>
<svg style="left:1px;top:175px;" width="17" height="17" viewBox="0 0 17 17"><path d="M.5 2.5L7 .3L11.5 1.6V6.2L15.6 9V13.1L10.4 15.6L.5 6.4Z" fill="#f2dc20" stroke="#101010" stroke-width="1.1" stroke-linejoin="round"/><path d="M.5 2.5L7 .3L11.5 1.6L6 3.3Z" fill="#fff080"/><path d="M6.2 7.4L11.5 6.2L15.6 9L10.4 11.4Z" fill="#e8c830"/><path d="M10.4 11.4L15.6 9V13.1L10.4 15.6Z" fill="#c8a818"/><path d="M.5 2.5L10.4 11.4V15.6M10.4 11.4L15.6 9M6.2 3.3V7.4L11.5 6.2M6.2 3.3L11.5 1.6M6.2 7.4L10.4 11.4" fill="none" stroke="#101010" stroke-width="1"/></svg>
<svg style="left:20px;top:193px;" width="16" height="16" viewBox="0 0 16 16"><path d="M.5 3.5V14.5H15.5V4.5H8L6.5 2.5H2Z" fill="#f4c838" stroke="#9a7818" stroke-width=".9"/><rect x="1.5" y="5.5" width="13" height="8" fill="#ffe070"/><circle cx="8" cy="9.5" r="3.5" fill="#fff" stroke="#202040" stroke-width="1"/><path d="M6.5 11L9.5 8" stroke="#3a6ad0" stroke-width="1.2"/></svg>
<svg style="left:20px;top:211px;" width="16" height="16" viewBox="0 0 16 16"><path d="M.5 3.5V14.5H15.5V4.5H8L6.5 2.5H2Z" fill="#f4c838" stroke="#9a7818" stroke-width=".9"/><rect x="1.5" y="5.5" width="13" height="8" fill="#ffe070"/><text x="4" y="13" font-family="Liberation Serif" font-weight="bold" font-size="10" fill="#1a2a8a">A</text></svg>
<svg style="left:20px;top:229px;" width="16" height="16" viewBox="0 0 16 16"><path d="M.5 3.5V14.5H15.5V4.5H8L6.5 2.5H2Z" fill="#f4c838" stroke="#9a7818" stroke-width=".9"/><rect x="1.5" y="5.5" width="13" height="8" fill="#ffe070"/><text x="4.5" y="13" font-family="Liberation Serif" font-weight="bold" font-size="10" fill="#1a2a8a">Σ</text></svg>
<svg style="left:20px;top:247px;" width="16" height="16" viewBox="0 0 16 16"><circle cx="3" cy="3" r="2.4" fill="#e02020"/><circle cx="3" cy="8" r="2.4" fill="#2040d0"/><circle cx="3" cy="13" r="2.4" fill="#20a020"/><path d="M7 3H15M7 8H15M7 13H15" stroke="#202020" stroke-width="1.6"/></svg>
<svg style="left:19px;top:265px;" width="16" height="16" viewBox="0 0 16 16"><path d="M8 2L14 8L8 14L2 8Z" fill="none" stroke="#101010" stroke-width="1.1"/><path d="M1 1L4 4M12 12L15 15" stroke="#101010" stroke-width="1"/><path d="M6 7L9 10" stroke="#101010" stroke-width=".9"/></svg>
<svg style="left:19px;top:283px;" width="16" height="16" viewBox="0 0 16 16"><path d="M8 2L14 8L8 14L2 8Z" fill="none" stroke="#101010" stroke-width="1.1"/><path d="M1 1L4 4M12 12L15 15" stroke="#101010" stroke-width="1"/><path d="M6 7L9 10" stroke="#101010" stroke-width=".9"/></svg>
<svg style="left:19px;top:301px;" width="16" height="16" viewBox="0 0 16 16"><path d="M8 2L14 8L8 14L2 8Z" fill="none" stroke="#101010" stroke-width="1.1"/><path d="M1 1L4 4M12 12L15 15" stroke="#101010" stroke-width="1"/><path d="M6 7L9 10" stroke="#101010" stroke-width=".9"/></svg>
<svg style="left:20px;top:319px;" width="16" height="16" viewBox="0 0 16 16"><path d="M4.5 2V13" stroke="#101010" stroke-width="1"/><path d="M2.5 4L4.5 1L6.5 4" fill="#c01010" stroke="#c01010"/><path d="M4.5 13H14M11 11L14 13L11 15" fill="none" stroke="#c01010" stroke-width="1.1"/><path d="M2.5 11L6.5 15M6.5 11L2.5 15" stroke="#101010" stroke-width=".9"/></svg>
<svg style="left:20px;top:337px;" width="16" height="16" viewBox="0 0 16 16"><rect x="2.5" y="2.5" width="12" height="11" fill="#e8e8ea" stroke="#101010" stroke-width="1.1"/><rect x="0.5" y="5" width="4" height="3" fill="#f0a020" stroke="#101010" stroke-width=".7"/><rect x="0.5" y="10" width="4" height="3" fill="#f0a020" stroke="#101010" stroke-width=".7"/><rect x="6" y="0.5" width="4" height="3" fill="#f0a020" stroke="#101010" stroke-width=".7"/><rect x="6" y="12.5" width="4" height="3" fill="#f0a020" stroke="#101010" stroke-width=".7"/><circle cx="9.5" cy="8" r="3.2" fill="#fff" stroke="#101010" stroke-width="1.1"/></svg>
<svg style="left:16px;top:354px;" width="22" height="20" viewBox="0 0 22 20"><g transform="scale(.95)"><path d="M4.3 3.2L10.6 9.2V18.3L4.3 12.6Z" fill="#dfe2e8" stroke="#2a2e38" stroke-width="1"/><path d="M4.3 10.8L10.6 16.5V18.3L4.3 12.6Z" fill="#c86a10"/><path d="M13.4 3.2L19.6 9.2V15.5L13.4 10Z" fill="#dfe2e8" stroke="#2a2e38" stroke-width="1"/><path d="M10.6 12.5L13.4 10.5L19.6 16L16.8 18.3H10.6Z" fill="#f59015" stroke="#8a4a08" stroke-width=".8"/></g></svg>
<svg style="left:20px;top:373px;" width="16" height="16" viewBox="0 0 16 16"><path d="M.5 3.5L3.5 .5H15.5V12.5L12.5 15.5H.5Z" fill="#f6d020" stroke="#202020" stroke-width="1"/><path d="M.5 3.5H12.5V15.5M12.5 3.5L15.5 .5" fill="none" stroke="#202020" stroke-width=".9"/><rect x="3.5" y="6.5" width="6" height="6" fill="#1a8a1a" stroke="#101010" stroke-width=".9"/><path d="M5 9H8V11" stroke="#d0f0c0" stroke-width=".9" fill="none"/></svg>
<svg style="left:20px;top:391px;" width="16" height="16" viewBox="0 0 16 16"><path d="M.5 3.5L3.5 .5H15.5V12.5L12.5 15.5H.5Z" fill="#f6d020" stroke="#202020" stroke-width="1"/><path d="M.5 3.5H12.5V15.5M12.5 3.5L15.5 .5" fill="none" stroke="#202020" stroke-width=".9"/><rect x="3.5" y="6.5" width="6" height="6" fill="#1a8a1a" stroke="#101010" stroke-width=".9"/><path d="M5 9H8V11" stroke="#d0f0c0" stroke-width=".9" fill="none"/></svg>
<svg style="left:20px;top:409px;" width="16" height="16" viewBox="0 0 16 16"><path d="M.5 3.5L3.5 .5H15.5V12.5L12.5 15.5H.5Z" fill="#f6d020" stroke="#202020" stroke-width="1"/><path d="M.5 3.5H12.5V15.5M12.5 3.5L15.5 .5" fill="none" stroke="#202020" stroke-width=".9"/><rect x="3.5" y="6.5" width="6" height="6" fill="#1a8a1a" stroke="#101010" stroke-width=".9"/><path d="M5 9H8V11" stroke="#d0f0c0" stroke-width=".9" fill="none"/></svg>
<svg style="left:20px;top:427px;" width="16" height="16" viewBox="0 0 16 16"><path d="M1 5L5 1H15V11L11 15H1Z" fill="#c8c9ce" stroke="#9a9ca4"/><path d="M1 5H11V15M11 5L15 1" fill="none" stroke="#a8aab0"/><path d="M3 7L8 12M6 7L10 11" stroke="#e8e9ec" stroke-width="1.2"/></svg>
<svg style="left:5px;top:216px;" width="9" height="9" viewBox="0 0 9 9"><rect x=".5" y=".5" width="8" height="8" fill="#f6f7fa" stroke="#9a9ca8"/><path d="M2 4.5H7M4.5 2V7" stroke="#2a3a6a"/></svg>
<svg style="left:5px;top:234px;" width="9" height="9" viewBox="0 0 9 9"><rect x=".5" y=".5" width="8" height="8" fill="#f6f7fa" stroke="#9a9ca8"/><path d="M2 4.5H7M4.5 2V7" stroke="#2a3a6a"/></svg>
<svg style="left:5px;top:360px;" width="9" height="9" viewBox="0 0 9 9"><rect x=".5" y=".5" width="8" height="8" fill="#f6f7fa" stroke="#9a9ca8"/><path d="M2 4.5H7M4.5 2V7" stroke="#2a3a6a"/></svg>
<svg style="left:5px;top:378px;" width="9" height="9" viewBox="0 0 9 9"><rect x=".5" y=".5" width="8" height="8" fill="#f6f7fa" stroke="#9a9ca8"/><path d="M2 4.5H7M4.5 2V7" stroke="#2a3a6a"/></svg>
<svg style="left:5px;top:396px;" width="9" height="9" viewBox="0 0 9 9"><rect x=".5" y=".5" width="8" height="8" fill="#f6f7fa" stroke="#9a9ca8"/><path d="M2 4.5H7M4.5 2V7" stroke="#2a3a6a"/></svg>
<svg style="left:5px;top:414px;" width="9" height="9" viewBox="0 0 9 9"><rect x=".5" y=".5" width="8" height="8" fill="#f6f7fa" stroke="#9a9ca8"/><path d="M2 4.5H7M4.5 2V7" stroke="#2a3a6a"/></svg>
<svg style="left:5px;top:432px;" width="9" height="9" viewBox="0 0 9 9"><rect x=".5" y=".5" width="8" height="8" fill="#f6f7fa" stroke="#9a9ca8"/><path d="M2 4.5H7M4.5 2V7" stroke="#2a3a6a"/></svg>
<div class="a" style="left:0;top:444px;width:191px;height:2px;background:#3d639a"></div>
<div class="a" style="left:193px;top:393px;width:8px;height:29px;background:#e6e8ee;border:1px solid #9a9da8;border-left:none;border-radius:0 3px 3px 0"></div>
<svg style="left:195px;top:396px;" width="5" height="23" viewBox="0 0 5 23"><path d="M4 1L1 3.5L4 6ZM4 9L1 11.5L4 14ZM4 17L1 19.5L4 22Z" fill="#5a6a9a"/></svg>
<svg style="left:641px;top:110px;" width="16" height="16" viewBox="0 0 16 16"><circle cx="6.5" cy="6.5" r="5.6" fill="#d6d8de" stroke="#70747e" stroke-width="1.4"/><circle cx="6.5" cy="6.5" r="4.2" fill="#eceef2"/><path d="M10.5 10.5L14.8 14.8" stroke="#5a8ad0" stroke-width="2.6" stroke-linecap="round"/><path d="M10.5 10.5L14.8 14.8" stroke="#a8d0f4" stroke-width="1" stroke-linecap="round"/><circle cx="6.5" cy="6.5" r="2.4" fill="none" stroke="#50545e" stroke-width="1.1" stroke-dasharray="1.3 1"/></svg>
<svg style="left:664px;top:110px;" width="16" height="16" viewBox="0 0 16 16"><circle cx="6.5" cy="6.5" r="5.6" fill="#d6d8de" stroke="#70747e" stroke-width="1.4" stroke-dasharray="2 1"/><circle cx="6.5" cy="6.5" r="4.2" fill="#eceef2"/><path d="M10.5 10.5L14.8 14.8" stroke="#5a8ad0" stroke-width="2.6" stroke-linecap="round"/><path d="M6.5 4V7M5 8.5H8" stroke="#50545e" stroke-width="1"/></svg>
<svg style="left:687px;top:110px;" width="17" height="17" viewBox="0 0 17 17"><path d="M1.5 3.5L4 1.5L14 11L11 14Z" fill="#7ab4e8" stroke="#2a5a9a" stroke-width="1"/><ellipse cx="12.5" cy="12.5" rx="3" ry="2.2" transform="rotate(45 12.5 12.5)" fill="#d8ecfc" stroke="#2a5a9a" stroke-width=".9"/><path d="M3 3L12 11.5" stroke="#e0f0ff" stroke-width="1"/><path d="M10 3.5H16M12.5 1.2L10 3.5L12.5 5.8" fill="none" stroke="#2a6ad0" stroke-width="1.4"/></svg>
<svg style="left:711px;top:110px;" width="15" height="16" viewBox="0 0 15 16"><path d="M.5 3Q7.5 -1 14.5 3V14.5Q12 15.5 10.5 14.5V5.5Q7.5 4 4.5 5.5V14.5Q3 15.5 .5 14.5Z" fill="#5a9ae0" stroke="#2a4a7a" stroke-width=".9"/><path d="M2.5 4V14M12.5 4V14" stroke="#f0e020" stroke-width="2.2"/><path d="M2.5 4V14M12.5 4V14" stroke="#5a5a20" stroke-width="2.2" stroke-dasharray=".8 1.6"/><path d="M4.5 5.5Q7.5 4 10.5 5.5V14Q7.5 13 4.5 14Z" fill="#b8d8f8"/></svg>
<svg style="left:733px;top:110px;" width="17" height="17" viewBox="0 0 17 17"><path d="M.5 4.5L4.5 .5H16.5V12.5L12.5 16.5H.5Z" fill="#f8f8fa" stroke="#303440" stroke-width="1"/><rect x=".5" y="4.5" width="12" height="12" fill="#7ab0e8" stroke="#2a4a8a" stroke-width="1"/><path d="M12.5 4.5L16.5 .5" stroke="#303440"/><path d="M8 1.5V4M6.8 2.8H9.2M14.5 9V11.5M13.3 10.3H15.7" stroke="#d02020" stroke-width="1"/></svg>
<svg style="left:753px;top:119px;" width="6" height="4" viewBox="0 0 6 4"><path d="M0 0H5.5L2.75 3.2Z" fill="#3a3e50"/></svg>
<svg style="left:766px;top:110px;" width="17" height="17" viewBox="0 0 17 17"><path d="M.5 4.5L4.5 .5H16.5V12.5L12.5 16.5H.5Z" fill="#5a9ae0" stroke="#303440" stroke-width="1"/><rect x=".5" y="4.5" width="12" height="12" fill="#f4f6f8" stroke="#303440" stroke-width="1"/><rect x="7" y="5" width="5" height="11" fill="#6aaaf0"/><path d="M12.5 4.5L16.5 .5" stroke="#303440"/></svg>
<svg style="left:786px;top:119px;" width="6" height="4" viewBox="0 0 6 4"><path d="M0 0H5.5L2.75 3.2Z" fill="#3a3e50"/></svg>
<svg style="left:799px;top:111px;" width="16" height="14" viewBox="0 0 16 14"><circle cx="4" cy="9.5" r="3.3" fill="none" stroke="#60646e" stroke-width="1.2"/><circle cx="11.5" cy="9.5" r="3.3" fill="none" stroke="#60646e" stroke-width="1.2"/><path d="M.8 8.5Q1 3 5 2M14.8 8.5L14 4" fill="none" stroke="#60646e" stroke-width="1.1"/><path d="M7.3 9Q7.75 8 8.2 9" stroke="#60646e"/></svg>
<svg style="left:819px;top:119px;" width="6" height="4" viewBox="0 0 6 4"><path d="M0 0H5.5L2.75 3.2Z" fill="#3a3e50"/></svg>
<svg style="left:832px;top:110px;" width="16" height="16" viewBox="0 0 16 16"><circle cx="8" cy="8" r="7.6" fill="#30b040"/><path d="M8 8V.4A7.6 7.6 0 0 0 .4 8Z" fill="#4a8ae0"/><path d="M8 8H15.6A7.6 7.6 0 0 0 8 .4Z" fill="#e04040"/><path d="M8 8V15.6A7.6 7.6 0 0 0 15.6 8Z" fill="#f0d050"/><circle cx="5" cy="4.5" r="1.8" fill="#fff" fill-opacity=".6"/></svg>
<svg style="left:855px;top:110px;" width="17" height="17" viewBox="0 0 17 17"><path d="M0 10H17V17H0Z" fill="#f4f4f4"/><path d="M0 10H4V13.5H0ZM8 10H12V13.5H8ZM4 13.5H8V17H4ZM12 13.5H16V17H12Z" fill="#202020"/><g transform="translate(2,0) scale(.8)"><circle cx="8" cy="8" r="7.6" fill="#30b040"/><path d="M8 8V.4A7.6 7.6 0 0 0 .4 8Z" fill="#4a8ae0"/><path d="M8 8H15.6A7.6 7.6 0 0 0 8 .4Z" fill="#e04040"/><path d="M8 8V15.6A7.6 7.6 0 0 0 15.6 8Z" fill="#f0d050"/><circle cx="5" cy="4.5" r="1.8" fill="#fff" fill-opacity=".6"/></g></svg>
<svg style="left:875px;top:119px;" width="6" height="4" viewBox="0 0 6 4"><path d="M0 0H5.5L2.75 3.2Z" fill="#3a3e50"/></svg>
<svg style="left:888px;top:110px;" width="17" height="17" viewBox="0 0 17 17"><rect x=".8" y="3" width="14" height="10.5" fill="#eceef2" stroke="#40444e" stroke-width="1.3"/><rect x="2.5" y="5" width="10.5" height="6.5" fill="#c8cad2"/><path d="M2 12L6 7L9 9.5L12.5 6" fill="none" stroke="#505460" stroke-width="1"/><path d="M3 16L7.8 13.5L12.5 16" fill="none" stroke="#40444e" stroke-width="1"/><path d="M7 5L11 1H15.5L16.5 2.5L15 5H11L9 7Z" fill="#f0d090" stroke="#a07a40" stroke-width=".6"/></svg>
<svg style="left:908px;top:119px;" width="6" height="4" viewBox="0 0 6 4"><path d="M0 0H5.5L2.75 3.2Z" fill="#3a3e50"/></svg>
<svg style="left:1297px;top:119px;" width="11" height="5" viewBox="0 0 11 5"><rect x="0.5" y="0.5" width="9" height="3" fill="#8a8d98" stroke="#60636e" stroke-width=".6"/></svg>
<svg style="left:1319px;top:112px;" width="14" height="14" viewBox="0 0 14 14"><path d="M4 1H13V7H10" fill="none" stroke="#686b76" stroke-width="1.8"/><rect x="1" y="5" width="9" height="7" fill="none" stroke="#686b76" stroke-width="1.8"/></svg>
<svg style="left:1343px;top:112px;" width="13" height="13" viewBox="0 0 13 13"><path d="M1.5 1.5L11.5 11.5M11.5 1.5L1.5 11.5" stroke="#787b86" stroke-width="2.4"/></svg>
<div class="a" style="left:1342px;top:163px;width:26px;height:23px;border:1px solid #9a9da8;border-right:none;border-radius:4px 0 0 4px;background:linear-gradient(90deg,#f2f3f7,#e8eaf0)"></div>
<div class="a" style="left:1342px;top:187px;width:26px;height:23px;border:1px solid #9a9da8;border-right:none;border-radius:4px 0 0 4px;background:linear-gradient(90deg,#d0d3dd,#c6c9d4)"></div>
<div class="a" style="left:1342px;top:211px;width:26px;height:23px;border:1px solid #9a9da8;border-right:none;border-radius:4px 0 0 4px;background:linear-gradient(90deg,#d0d3dd,#c6c9d4)"></div>
<div class="a" style="left:1342px;top:235px;width:26px;height:23px;border:1px solid #9a9da8;border-right:none;border-radius:4px 0 0 4px;background:linear-gradient(90deg,#d0d3dd,#c6c9d4)"></div>
<div class="a" style="left:1342px;top:259px;width:26px;height:23px;border:1px solid #9a9da8;border-right:none;border-radius:4px 0 0 4px;background:linear-gradient(90deg,#d0d3dd,#c6c9d4)"></div>
<div class="a" style="left:1342px;top:283px;width:26px;height:23px;border:1px solid #9a9da8;border-right:none;border-radius:4px 0 0 4px;background:linear-gradient(90deg,#d0d3dd,#c6c9d4)"></div>
<div class="a" style="left:1342px;top:307px;width:26px;height:23px;border:1px solid #9a9da8;border-right:none;border-radius:4px 0 0 4px;background:linear-gradient(90deg,#d0d3dd,#c6c9d4)"></div>
<svg style="left:1347px;top:166px;" width="16" height="16" viewBox="0 0 16 16"><path d="M1 8L8 1L15 8H13V15H3V8Z" fill="#fde880" stroke="#303030" stroke-width="1"/><rect x="11" y="1" width="2.5" height="4" fill="#c02020"/><rect x="6" y="9" width="4" height="6" fill="#f0c020" stroke="#303030" stroke-width=".8"/></svg>
<svg style="left:1347px;top:190px;" width="16" height="16" viewBox="0 0 16 16"><rect x="1" y="8" width="4" height="8" fill="#20a020" stroke="#202020" stroke-width=".8"/><rect x="6" y="5" width="4" height="11" fill="#f0c020" stroke="#202020" stroke-width=".8"/><rect x="11" y="2" width="4" height="14" fill="#3a6ad0" stroke="#202020" stroke-width=".8"/></svg>
<svg style="left:1347px;top:214px;" width="16" height="16" viewBox="0 0 16 16"><path d="M1 4H6L7.5 5.5H14V14H1Z" fill="#e8b830" stroke="#9a7410"/><path d="M2.5 8H16L13.5 14H1Z" fill="#fbe070" stroke="#9a7410"/></svg>
<svg style="left:1347px;top:238px;" width="16" height="16" viewBox="0 0 16 16"><rect x="1" y="3" width="12" height="12" rx="2" fill="#d02020"/><text x="3" y="12.5" font-family="Liberation Sans" font-weight="bold" font-size="9" fill="#fff">$</text><circle cx="11" cy="10" r="3" fill="#d8e8f8" stroke="#3a5a8a"/><path d="M13 12L16 15" stroke="#3a5a8a" stroke-width="1.6"/></svg>
<svg style="left:1347px;top:262px;" width="16" height="16" viewBox="0 0 16 16"><rect x="1" y="1" width="14" height="10" fill="#f0f2f6" stroke="#3a4a6a"/><rect x="3" y="3" width="4" height="2" fill="#f0c020"/><path d="M9 4H13M3 8H13" stroke="#3a4a6a"/><path d="M1 14H8M6 12L8 14L6 16" fill="none" stroke="#1a3ab0" stroke-width="1.5"/></svg>
<svg style="left:1347px;top:286px;" width="16" height="16" viewBox="0 0 16 16"><circle cx="8" cy="8" r="7.5" fill="#30b040"/><path d="M8 8V.5A7.5 7.5 0 0 0 .5 8Z" fill="#4a8ae0"/><path d="M8 8H15.5A7.5 7.5 0 0 0 8 .5Z" fill="#e04040"/><path d="M8 8V15.5A7.5 7.5 0 0 0 15.5 8Z" fill="#f0d050"/><circle cx="5" cy="4.5" r="1.8" fill="#fff" fill-opacity=".6"/></svg>
<svg style="left:1347px;top:310px;" width="16" height="16" viewBox="0 0 16 16"><rect x="2" y="5" width="11" height="10" fill="#f4f4f4" stroke="#303030"/><path d="M4 9H11M4 11H11M4 13H11" stroke="#8a8a8a"/><path d="M5 6L11 1H16V4L10 8Z" fill="#f0c080" stroke="#8a6030" stroke-width=".8"/></svg>
<svg style="left:370px;top:295px;" width="830" height="225" viewBox="0 0 830 225"><defs><linearGradient id="bs" x1="0" y1="0" x2="0" y2="1"><stop offset="0" stop-color="#7b7e8e"/><stop offset="1" stop-color="#6c6f7f"/></linearGradient><linearGradient id="ff" x1="0" y1="0" x2="0" y2="1"><stop offset="0" stop-color="#7a7d8d"/><stop offset="1" stop-color="#777a8a"/></linearGradient></defs><polygon points="90.40,87.00 786.40,9.40 787.30,19.13 110.70,95.40 26.00,199.80 10.20,193.50 7.50,189.50" fill="#767988"/><polygon points="110.70,95.40 803.50,17.30 813.90,111.20 26.00,199.80" fill="url(#ff)"/><polygon points="26.00,199.80 813.90,111.20 814.20,124.60 25.30,213.40" fill="url(#bs)"/><polygon points="7.50,189.50 10.20,193.50 26.00,199.80 25.30,213.40 9.40,206.20" fill="#6d7080"/><polygon points="10.20,191.20 35.00,188.20 26.00,199.80 10.20,193.60" fill="#858898"/><polygon points="10.60,190.60 35.50,187.60 33.20,191.00 10.60,193.00" fill="#a6a9b8"/><polyline points="10.60,190.60 35.50,187.60" stroke="#15161c" stroke-width=".9" fill="none"/><polyline points="10.60,193.00 33.20,191.00" stroke="#15161c" stroke-width=".9" fill="none"/><polyline points="7.50,189.50 90.40,87.00 786.40,9.40" stroke="#15161c" stroke-width="1.35" fill="none" stroke-linejoin="round"/><polyline points="9.21,190.88 91.54,89.09 786.64,11.59" stroke="#15161c" stroke-width="1.15" stroke-opacity=".9" fill="none" stroke-linejoin="round"/><polyline points="786.40,9.40 787.30,19.13" stroke="#15161c" stroke-width="1.35" fill="none" stroke-linejoin="round"/><polyline points="26.00,199.80 110.70,95.40 803.50,17.30" stroke="#15161c" stroke-width="1.35" fill="none" stroke-linejoin="round"/><polyline points="27.71,201.19 111.84,97.49 803.75,19.49" stroke="#15161c" stroke-width="1.15" stroke-opacity=".9" fill="none" stroke-linejoin="round"/><polyline points="803.50,17.30 813.90,111.20 814.20,124.60" stroke="#15161c" stroke-width="1.35" fill="none" stroke-linejoin="round"/><polyline points="26.00,199.80 813.90,111.20" stroke="#15161c" stroke-width="1.35" fill="none" stroke-linejoin="round"/><polyline points="7.50,189.50 9.40,206.20 25.30,213.40 814.20,124.60" stroke="#15161c" stroke-width="1.35" fill="none" stroke-linejoin="round"/><polyline points="26.00,199.80 25.30,213.40" stroke="#15161c" stroke-width="1.35" fill="none" stroke-linejoin="round"/><polyline points="10.20,193.50 26.00,199.80" stroke="#15161c" stroke-width="1.35" fill="none" stroke-linejoin="round"/></svg>
<svg style="left:215px;top:605px;" width="56" height="56" viewBox="0 0 56 56"><path d="M15 12.5L11.5 8M15 12.5L18.5 8M15 12.5V17" stroke="#208a20" stroke-width="1.1" fill="none"/><path d="M16.5 18L12 27.5H14.5V47H19V27.5H21.5Z" fill="#3aa03a" stroke="#105a18" stroke-width="1"/><path d="M18 48L40 45V42L48.5 45L40 48.5V46.5L18 49.8Z" fill="#2a2ad0" stroke="#10108a" stroke-width=".9"/><circle cx="13.5" cy="45" r="3.6" fill="#f03a3a" fill-opacity=".9"/><path d="M11 42.5L16 47.5M16 42.5L11 47.5" stroke="#a01010" stroke-width=".8"/><path d="M48 39.5H53L48 47.5H53" fill="none" stroke="#2020d0" stroke-width="1.1"/></svg>
<div id="status" class="a"></div>
<div class="a t" style="left:2.00px;top:713.64px;font-size:12px;color:#101018;letter-spacing:-0.110px;-webkit-text-stroke:0.22px #101018;">SolidWorks Student Design Kit - Nur für akademische Zwecke</div>
<div class="a" style="left:1149px;top:711px;width:1px;height:16px;background:#f0f1f5"></div>
<div class="a" style="left:1157px;top:711px;width:1px;height:16px;background:#f0f1f5"></div>
<div class="a" style="left:1245px;top:711px;width:1px;height:16px;background:#f0f1f5"></div>
<div class="a" style="left:1253px;top:711px;width:1px;height:16px;background:#f0f1f5"></div>
<div class="a" style="left:1261px;top:711px;width:1px;height:16px;background:#f0f1f5"></div>
<div class="a t" style="left:1162.30px;top:713.64px;font-size:12px;color:#101018;letter-spacing:-0.119px;-webkit-text-stroke:0.22px #101018;">Bearbeiten Teil</div>
<svg style="left:1273px;top:712px;" width="13" height="13" viewBox="0 0 13 13"><rect x=".5" y=".5" width="12" height="12" fill="#f0f4f0" stroke="#30406a"/><text x="3" y="11" font-family="Liberation Sans" font-weight="bold" font-size="11" fill="#20a020">?</text></svg>
<svg style="left:1337px;top:711px;" width="15" height="15" viewBox="0 0 15 15"><path d="M1 8L8 1H13.5V6.5L6.5 13.5Z" fill="#f4c820" stroke="#a07a10"/><circle cx="10.5" cy="4" r="1.3" fill="#fff" stroke="#a07a10" stroke-width=".6"/><path d="M4 8L8 4M6 10L10 6" stroke="#c09a20" stroke-width=".8"/></svg>
<div id="taskbar" class="a"></div>
<svg style="left:0;top:729px" width="1366" height="39" viewBox="0 0 1366 39"><defs><linearGradient id="tbg" x1="0" y1="0" x2="1" y2="0"><stop offset="0" stop-color="#1d4866"/><stop offset=".04" stop-color="#275c7a"/><stop offset=".15" stop-color="#326e8c"/><stop offset=".35" stop-color="#3a7898"/><stop offset=".45" stop-color="#357396"/><stop offset=".52" stop-color="#2b6794"/><stop offset=".62" stop-color="#255c90"/><stop offset=".68" stop-color="#285f94"/><stop offset=".72" stop-color="#1f5089"/><stop offset=".8" stop-color="#1c4a82"/><stop offset=".9" stop-color="#183f74"/><stop offset="1" stop-color="#14376a"/></linearGradient><linearGradient id="tbv" x1="0" y1="0" x2="0" y2="1"><stop offset="0" stop-color="#fff" stop-opacity=".06"/><stop offset=".5" stop-color="#fff" stop-opacity="0"/><stop offset="1" stop-color="#000" stop-opacity=".04"/></linearGradient><filter id="tbb" x="-50%" y="-50%" width="200%" height="200%"><feGaussianBlur stdDeviation="2.5"/></filter></defs><rect width="1366" height="39" fill="url(#tbg)"/><rect width="1366" height="39" fill="url(#tbv)"/><path d="M470 40L640 8L700 4L560 40Z" fill="#8ac0d8" fill-opacity=".12" filter="url(#tbb)"/><path d="M905 -2Q950 18 985 42" stroke="#c8a8b0" stroke-width="7" stroke-opacity=".75" fill="none" filter="url(#tbb)"/></svg>
<div class="a" style="left:0;top:728px;width:1366px;height:1px;background:#1a2632"></div><div class="a" style="left:0;top:729px;width:1366px;height:1px;background:rgba(150,190,215,.5)"></div>
<svg style="left:8px;top:730px;" width="38" height="37" viewBox="0 0 38 37"><defs><linearGradient id="orb" x1="0" y1="0" x2="0" y2="1"><stop offset="0" stop-color="#c8dce8"/><stop offset=".45" stop-color="#5a8aa8"/><stop offset=".55" stop-color="#1a5a90"/><stop offset=".85" stop-color="#2a9ad8"/><stop offset="1" stop-color="#50d0f8"/></linearGradient></defs><circle cx="19" cy="18.5" r="17.5" fill="url(#orb)" stroke="#9ac8e8" stroke-opacity=".6"/><path d="M10 10Q14 8 18 10L17 17Q13 15 9 17Z" fill="#f05a20"/><path d="M19 10Q23 12 28 10L27 17Q23 19 18 17Z" fill="#7ac030"/><path d="M9 18Q13 16 17 18L16 25Q12 23 8 25Z" fill="#2a9ae0"/><path d="M18 18Q22 20 27 18L26 25Q22 27 17 25Z" fill="#f8c020"/><path d="M6 26Q19 36 32 26Q26 35 19 35Q12 35 6 26Z" fill="#40c0f0" fill-opacity=".6"/></svg>
<svg style="left:58px;top:733px;" width="9" height="32" viewBox="0 0 9 32"><rect x="0" y="0" width="1.5" height="1.5" fill="#0c2032"/><rect x="1" y="1" width="1" height="1" fill="#8ab0c8" fill-opacity=".45"/><rect x="0" y="4" width="1.5" height="1.5" fill="#0c2032"/><rect x="1" y="5" width="1" height="1" fill="#8ab0c8" fill-opacity=".45"/><rect x="0" y="8" width="1.5" height="1.5" fill="#0c2032"/><rect x="1" y="9" width="1" height="1" fill="#8ab0c8" fill-opacity=".45"/><rect x="0" y="12" width="1.5" height="1.5" fill="#0c2032"/><rect x="1" y="13" width="1" height="1" fill="#8ab0c8" fill-opacity=".45"/><rect x="0" y="16" width="1.5" height="1.5" fill="#0c2032"/><rect x="1" y="17" width="1" height="1" fill="#8ab0c8" fill-opacity=".45"/><rect x="0" y="20" width="1.5" height="1.5" fill="#0c2032"/><rect x="1" y="21" width="1" height="1" fill="#8ab0c8" fill-opacity=".45"/><rect x="0" y="24" width="1.5" height="1.5" fill="#0c2032"/><rect x="1" y="25" width="1" height="1" fill="#8ab0c8" fill-opacity=".45"/><rect x="0" y="28" width="1.5" height="1.5" fill="#0c2032"/><rect x="1" y="29" width="1" height="1" fill="#8ab0c8" fill-opacity=".45"/><rect x="3" y="0" width="1.5" height="1.5" fill="#0c2032"/><rect x="4" y="1" width="1" height="1" fill="#8ab0c8" fill-opacity=".45"/><rect x="3" y="4" width="1.5" height="1.5" fill="#0c2032"/><rect x="4" y="5" width="1" height="1" fill="#8ab0c8" fill-opacity=".45"/><rect x="3" y="8" width="1.5" height="1.5" fill="#0c2032"/><rect x="4" y="9" width="1" height="1" fill="#8ab0c8" fill-opacity=".45"/><rect x="3" y="12" width="1.5" height="1.5" fill="#0c2032"/><rect x="4" y="13" width="1" height="1" fill="#8ab0c8" fill-opacity=".45"/><rect x="3" y="16" width="1.5" height="1.5" fill="#0c2032"/><rect x="4" y="17" width="1" height="1" fill="#8ab0c8" fill-opacity=".45"/><rect x="3" y="20" width="1.5" height="1.5" fill="#0c2032"/><rect x="4" y="21" width="1" height="1" fill="#8ab0c8" fill-opacity=".45"/><rect x="3" y="24" width="1.5" height="1.5" fill="#0c2032"/><rect x="4" y="25" width="1" height="1" fill="#8ab0c8" fill-opacity=".45"/><rect x="3" y="28" width="1.5" height="1.5" fill="#0c2032"/><rect x="4" y="29" width="1" height="1" fill="#8ab0c8" fill-opacity=".45"/><rect x="6" y="0" width="1.5" height="1.5" fill="#0c2032"/><rect x="7" y="1" width="1" height="1" fill="#8ab0c8" fill-opacity=".45"/><rect x="6" y="4" width="1.5" height="1.5" fill="#0c2032"/><rect x="7" y="5" width="1" height="1" fill="#8ab0c8" fill-opacity=".45"/><rect x="6" y="8" width="1.5" height="1.5" fill="#0c2032"/><rect x="7" y="9" width="1" height="1" fill="#8ab0c8" fill-opacity=".45"/><rect x="6" y="12" width="1.5" height="1.5" fill="#0c2032"/><rect x="7" y="13" width="1" height="1" fill="#8ab0c8" fill-opacity=".45"/><rect x="6" y="16" width="1.5" height="1.5" fill="#0c2032"/><rect x="7" y="17" width="1" height="1" fill="#8ab0c8" fill-opacity=".45"/><rect x="6" y="20" width="1.5" height="1.5" fill="#0c2032"/><rect x="7" y="21" width="1" height="1" fill="#8ab0c8" fill-opacity=".45"/><rect x="6" y="24" width="1.5" height="1.5" fill="#0c2032"/><rect x="7" y="25" width="1" height="1" fill="#8ab0c8" fill-opacity=".45"/><rect x="6" y="28" width="1.5" height="1.5" fill="#0c2032"/><rect x="7" y="29" width="1" height="1" fill="#8ab0c8" fill-opacity=".45"/></svg>
<svg style="left:1134px;top:733px;" width="9" height="32" viewBox="0 0 9 32"><rect x="0" y="0" width="1.5" height="1.5" fill="#0c2032"/><rect x="1" y="1" width="1" height="1" fill="#8ab0c8" fill-opacity=".45"/><rect x="0" y="4" width="1.5" height="1.5" fill="#0c2032"/><rect x="1" y="5" width="1" height="1" fill="#8ab0c8" fill-opacity=".45"/><rect x="0" y="8" width="1.5" height="1.5" fill="#0c2032"/><rect x="1" y="9" width="1" height="1" fill="#8ab0c8" fill-opacity=".45"/><rect x="0" y="12" width="1.5" height="1.5" fill="#0c2032"/><rect x="1" y="13" width="1" height="1" fill="#8ab0c8" fill-opacity=".45"/><rect x="0" y="16" width="1.5" height="1.5" fill="#0c2032"/><rect x="1" y="17" width="1" height="1" fill="#8ab0c8" fill-opacity=".45"/><rect x="0" y="20" width="1.5" height="1.5" fill="#0c2032"/><rect x="1" y="21" width="1" height="1" fill="#8ab0c8" fill-opacity=".45"/><rect x="0" y="24" width="1.5" height="1.5" fill="#0c2032"/><rect x="1" y="25" width="1" height="1" fill="#8ab0c8" fill-opacity=".45"/><rect x="0" y="28" width="1.5" height="1.5" fill="#0c2032"/><rect x="1" y="29" width="1" height="1" fill="#8ab0c8" fill-opacity=".45"/><rect x="3" y="0" width="1.5" height="1.5" fill="#0c2032"/><rect x="4" y="1" width="1" height="1" fill="#8ab0c8" fill-opacity=".45"/><rect x="3" y="4" width="1.5" height="1.5" fill="#0c2032"/><rect x="4" y="5" width="1" height="1" fill="#8ab0c8" fill-opacity=".45"/><rect x="3" y="8" width="1.5" height="1.5" fill="#0c2032"/><rect x="4" y="9" width="1" height="1" fill="#8ab0c8" fill-opacity=".45"/><rect x="3" y="12" width="1.5" height="1.5" fill="#0c2032"/><rect x="4" y="13" width="1" height="1" fill="#8ab0c8" fill-opacity=".45"/><rect x="3" y="16" width="1.5" height="1.5" fill="#0c2032"/><rect x="4" y="17" width="1" height="1" fill="#8ab0c8" fill-opacity=".45"/><rect x="3" y="20" width="1.5" height="1.5" fill="#0c2032"/><rect x="4" y="21" width="1" height="1" fill="#8ab0c8" fill-opacity=".45"/><rect x="3" y="24" width="1.5" height="1.5" fill="#0c2032"/><rect x="4" y="25" width="1" height="1" fill="#8ab0c8" fill-opacity=".45"/><rect x="3" y="28" width="1.5" height="1.5" fill="#0c2032"/><rect x="4" y="29" width="1" height="1" fill="#8ab0c8" fill-opacity=".45"/><rect x="6" y="0" width="1.5" height="1.5" fill="#0c2032"/><rect x="7" y="1" width="1" height="1" fill="#8ab0c8" fill-opacity=".45"/><rect x="6" y="4" width="1.5" height="1.5" fill="#0c2032"/><rect x="7" y="5" width="1" height="1" fill="#8ab0c8" fill-opacity=".45"/><rect x="6" y="8" width="1.5" height="1.5" fill="#0c2032"/><rect x="7" y="9" width="1" height="1" fill="#8ab0c8" fill-opacity=".45"/><rect x="6" y="12" width="1.5" height="1.5" fill="#0c2032"/><rect x="7" y="13" width="1" height="1" fill="#8ab0c8" fill-opacity=".45"/><rect x="6" y="16" width="1.5" height="1.5" fill="#0c2032"/><rect x="7" y="17" width="1" height="1" fill="#8ab0c8" fill-opacity=".45"/><rect x="6" y="20" width="1.5" height="1.5" fill="#0c2032"/><rect x="7" y="21" width="1" height="1" fill="#8ab0c8" fill-opacity=".45"/><rect x="6" y="24" width="1.5" height="1.5" fill="#0c2032"/><rect x="7" y="25" width="1" height="1" fill="#8ab0c8" fill-opacity=".45"/><rect x="6" y="28" width="1.5" height="1.5" fill="#0c2032"/><rect x="7" y="29" width="1" height="1" fill="#8ab0c8" fill-opacity=".45"/></svg>
<div class="a tb" style="left:76px;width:59px"></div>
<div class="a tb" style="left:199px;width:55px"></div>
<div class="a tb" style="left:261px;width:60px"></div>
<div class="a tb" style="left:386px;width:59px"></div>
<div class="a" style="left:254px;top:729px;width:4px;height:38px;border:1px solid rgba(10,20,30,.5);border-left:none;border-radius:0 3px 3px 0;background:rgba(255,255,255,.15)"></div>
<div class="a tb" style="left:324px;width:58px;background:linear-gradient(rgba(255,255,255,.75),rgba(235,242,248,.6) 45%,rgba(190,212,228,.55) 55%,rgba(215,230,240,.65));border-color:rgba(20,30,40,.6)"></div>
<svg style="left:89px;top:734px;" width="32" height="30" viewBox="0 0 32 30"><path d="M2 4H11L13 6H30V26H2Z" fill="#e8c860" stroke="#a08030" stroke-width=".8"/><path d="M6 2H24V10H6Z" fill="#fff"/><rect x="8" y="2" width="3" height="2" fill="#20a020"/><rect x="13" y="4" width="3" height="2" fill="#d02020"/><rect x="19" y="6" width="3" height="2" fill="#2080e0"/><path d="M1 9H31L29 28H3Z" fill="#fae8a0" stroke="#b89840" stroke-width=".8"/><path d="M7 29V20H25V29M10 29V23H22V29" fill="none" stroke="#60b8f0" stroke-width="2.2"/></svg>
<svg style="left:152px;top:736px;" width="28" height="26" viewBox="0 0 28 26"><rect x="6" y="2" width="21" height="22" fill="#9ad0f0" stroke="#3a8ac0" stroke-width=".8"/><rect x="3" y="3" width="21" height="22" fill="#a8d8f4" stroke="#3a8ac0" stroke-width=".8"/><rect x="0.5" y="4" width="21" height="22" fill="#bce2f8" stroke="#3a8ac0" stroke-width=".8"/><circle cx="11" cy="15" r="8" fill="#f07a20" stroke="#fff" stroke-width="1.4"/><path d="M8.5 10.5L15 15L8.5 19.5Z" fill="#fff"/></svg>
<svg style="left:210px;top:732px;" width="33" height="31" viewBox="0 0 33 31"><defs><radialGradient id="ffg" cx=".6" cy=".35" r=".6"><stop offset="0" stop-color="#a8e4ff"/><stop offset=".45" stop-color="#3a90d8"/><stop offset="1" stop-color="#1a3a90"/></radialGradient><linearGradient id="ffo" x1="0" y1="0" x2="0" y2="1"><stop offset="0" stop-color="#f8a020"/><stop offset=".7" stop-color="#e85a10"/><stop offset="1" stop-color="#c83a08"/></linearGradient></defs><circle cx="17.5" cy="14.5" r="13.5" fill="url(#ffg)"/><path d="M6 5Q1 12 3 20Q7 30 18 30Q28 29 31 20Q31 14 29 11Q29 20 22 23Q14 26 9 20Q6 16 9 12Q11 10 14 11Q11 8 12 4Q8 4 6 5Z" fill="url(#ffo)"/><path d="M9 12Q12 9 15 11L13 14Q10 15 9 12Z" fill="#f0c040"/><path d="M6 5L8 1L10 5Z" fill="#e86a10"/></svg>
<svg style="left:275px;top:732px;" width="33" height="32" viewBox="0 0 33 32"><defs><linearGradient id="avg" x1="0" y1="0" x2="0" y2="1"><stop offset="0" stop-color="#f06a50"/><stop offset=".5" stop-color="#d82a20"/><stop offset=".52" stop-color="#c81818"/><stop offset="1" stop-color="#d02020"/></linearGradient></defs><rect x=".5" y=".5" width="32" height="31" rx="3" fill="url(#avg)" stroke="#8a0a0a"/><path d="M6 25L13 9Q16 5 21 7Q27 10 27 17" fill="none" stroke="#fff" stroke-width="2.6" stroke-linecap="round"/><path d="M13 9L22 21Q24 25 27 24Q29 23 28 20" fill="none" stroke="#fff" stroke-width="2.4" stroke-linecap="round"/></svg>
<svg style="left:334px;top:732px;" width="36" height="33" viewBox="0 0 36 33"><path d="M2 7L17 1L34 6V24L18 31L2 25Z" fill="#c01818"/><path d="M2 7L17 1L34 6L18 12Z" fill="#d83030"/><path d="M2 7L18 12V31L2 25Z" fill="#d42020"/><path d="M18 12L34 6V24L18 31Z" fill="#a81010"/><text x="3.5" y="26" font-family="Liberation Sans" font-weight="bold" font-size="16" fill="#fff" transform="skewY(14) translate(0,-4)" textLength="12" lengthAdjust="spacingAndGlyphs">S</text><text x="18.5" y="26" font-family="Liberation Sans" font-weight="bold" font-size="16" fill="#e8e8ea" transform="skewY(-14) translate(0,5)" textLength="14" lengthAdjust="spacingAndGlyphs">W</text></svg>
<svg style="left:399px;top:733px;" width="33" height="31" viewBox="0 0 33 31"><path d="M3 17Q2 9 13 8Q24 7 26 14Q27 20 20 20Q16 20 17 24Q17 28 10 27Q4 25 3 17Z" fill="#cce4f4" stroke="#5a8ab0" stroke-width=".8"/><circle cx="8" cy="17" r="2.3" fill="#e02020"/><circle cx="11" cy="12" r="2.3" fill="#30b030"/><circle cx="17" cy="11" r="2.3" fill="#f0c020"/><circle cx="12" cy="22" r="2.3" fill="#5a8ab0"/><path d="M16 30L28 6" stroke="#e08a20" stroke-width="2.6"/><path d="M27 7L30 1L32 4Z" fill="#f0b060" stroke="#8a5a20" stroke-width=".6"/></svg>
<svg style="left:1184px;top:747px;" width="8" height="5" viewBox="0 0 8 5"><path d="M0 4.5L3.8 0L7.5 4.5Z" fill="#f0f4f8"/></svg>
<svg style="left:1204px;top:742px;" width="16" height="15" viewBox="0 0 16 15"><path d="M1.5 1V15" stroke="#fff" stroke-width="1.4"/><path d="M2 1.5H9L10 3H15L13 8H8L7 6.5H2Z" fill="#fff"/></svg>
<svg style="left:1229px;top:742px;" width="16" height="15" viewBox="0 0 16 15"><path d="M3 0V6M6 0V6M2 5H7V8H2Z" fill="#fff" stroke="#fff" stroke-width=".8"/><rect x="4" y="4" width="11" height="8" fill="#1a2a40" stroke="#fff" stroke-width="1.1"/><path d="M5 14H14M9.5 12V14M4.5 8V13H1" stroke="#fff" stroke-width="1.1" fill="none"/></svg>
<svg style="left:1254px;top:743px;" width="13" height="14" viewBox="0 0 13 14"><path d="M1 5H4L8 1V13L4 9H1Z" fill="#f0f2f4" stroke="#c0c8d0" stroke-width=".5"/><path d="M10.5 4Q12.5 7 10.5 10" fill="none" stroke="#e0e4e8" stroke-width="1"/></svg>
<div class="a" style="left:1352px;top:729px;width:14px;height:39px;border:1px solid rgba(180,200,220,.35);border-radius:2px;background:linear-gradient(90deg,rgba(255,255,255,.08),rgba(255,255,255,.18))"></div>
<div class="a t" style="left:1152.40px;top:739.64px;font-size:12px;color:#ffffff;letter-spacing:-0.080px;transform:scaleX(0.8800);transform-origin:0 0;-webkit-text-stroke:0.22px #ffffff;">DE</div>
<div class="a t" style="left:1299.70px;top:734.84px;font-size:12px;color:#ffffff;letter-spacing:-0.202px;transform:scaleX(0.9000);transform-origin:0 0;-webkit-text-stroke:0.22px #ffffff;">14:33</div>
<div class="a t" style="left:1285.70px;top:751.54px;font-size:12px;color:#ffffff;letter-spacing:-0.056px;transform:scaleX(0.9000);transform-origin:0 0;-webkit-text-stroke:0.22px #ffffff;">13.04.2010</div>
</body></html>
